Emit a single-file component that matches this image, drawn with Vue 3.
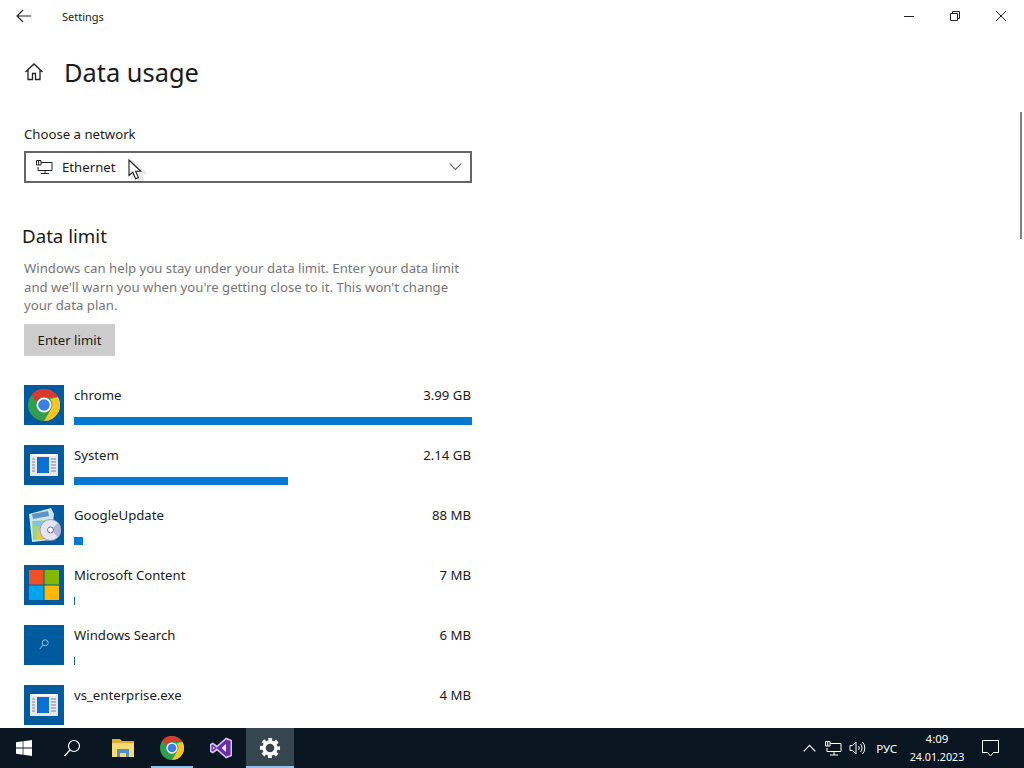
<script setup>
const apps = [
  { name: 'chrome', size: '3.99 GB', width: 398, icon: 'chrome' },
  { name: 'System', size: '2.14 GB', width: 214, icon: 'window' },
  { name: 'GoogleUpdate', size: '88 MB', width: 9, icon: 'setup' },
  { name: 'Microsoft Content', size: '7 MB', width: 1, icon: 'ms' },
  { name: 'Windows Search', size: '6 MB', width: 1, icon: 'search' },
  { name: 'vs_enterprise.exe', size: '4 MB', width: 0, icon: 'window' }
]
</script>

<template>
  <div class="screen">
    <div class="window">
      <header class="titlebar">
        <div class="title-left">
          <svg class="back" width="16" height="14" viewBox="0 0 16 14"><path d="M7 1 1 7l6 6M1 7h14" fill="none" stroke="#222" stroke-width="1.1" /></svg>
          <span class="app-title">Settings</span>
        </div>
        <div class="controls">
          <span class="ctl"><svg width="12" height="12" viewBox="0 0 12 12"><path d="M1 6.5h10" stroke="#222" /></svg></span>
          <span class="ctl"><svg width="12" height="12" viewBox="0 0 12 12"><path d="M1.5 3.5h7v7h-7zM3.5 3.5v-2h7v7h-2" fill="none" stroke="#222" /></svg></span>
          <span class="ctl"><svg width="12" height="12" viewBox="0 0 12 12"><path d="m1 1 10 10M11 1 1 11" stroke="#222" /></svg></span>
        </div>
      </header>

      <main class="content">
        <div class="page-head">
          <svg width="20" height="20" viewBox="0 0 20 20"><path d="M1.5 10 10 2l8.500 8M4 8v9.500h4.500v-6h3v6H16V8" fill="none" stroke="#222" stroke-width="1.3" /></svg>
          <h1>Data usage</h1>
        </div>

        <label class="field-label">Choose a network</label>
        <div class="select">
          <svg class="net" width="17" height="14" viewBox="0 0 17 14"><path d="M5 2.500h11v8H2V7M9 10.500v3M5 13.500h8M.5.500h4.500v4.500H.5zM2.700.500v4.500" fill="none" stroke="#222" /></svg>
          <span>Ethernet</span>
          <svg class="chev" width="13" height="8" viewBox="0 0 13 8"><path d="m.7.700 5.800 5.800L12.300.7" fill="none" stroke="#666" stroke-width="1.100" /></svg>
          <svg class="cursor" width="18" height="24" viewBox="0 0 18 24"><path d="M3 2v15l4-3 3 7 3-1.200-3-6.800h6z" fill="none" stroke="#000" stroke-opacity=".09" stroke-width="3" transform="translate(1.500 1)" /><path d="M1 1v15.500l3.800-3.300 2.800 6.600 2.800-1.200-2.800-6.300h5.200z" fill="#fff" stroke="#1a1a1a" stroke-width="1.100" /></svg>
        </div>

        <h2>Data limit</h2>
        <p class="desc">Windows can help you stay under your data limit. Enter your data limit and we'll warn you when you're getting close to it. This won't change your data plan.</p>
        <button class="limit-btn">Enter limit</button>

        <ul class="apps">
          <li v-for="app in apps" :key="app.name" class="app">
            <div class="tile">
              <svg v-if="app.icon === 'chrome'" width="32" height="32" viewBox="0 0 32 32">
                <circle cx="16" cy="16" r="16" fill="#2f9e4f" />
                <path d="M16 0a16 16 0 0 1 14 8H16a8 8 0 0 0-7.500 5L3.500 5.500A16 16 0 0 1 16 0z" fill="#d93a2e" />
                <path d="M30 8a16 16 0 0 1-14 24l7-12a8 8 0 0 0-1-10z" fill="#f8c325" />
                <circle cx="16" cy="16" r="7.500" fill="#fff" />
                <circle cx="16" cy="16" r="5.800" fill="#3b7fe6" />
              </svg>
              <svg v-else-if="app.icon === 'window'" width="28" height="22" viewBox="0 0 28 22">
                <rect width="28" height="22" fill="#e6e9ed" />
                <rect width="28" height="2" fill="#fafbfc" />
                <rect x="7" y="3" width="12" height="16" fill="#0c6fd6" />
                <path d="M2 5h3M2 8h3M2 11h3M2 14h3M2 17h3M21 5h5M21 8h5M21 11h5M21 14h5M21 17h5" stroke="#7b8790" />
              </svg>
              <svg v-else-if="app.icon === 'setup'" width="33" height="34" viewBox="0 0 33 34">
                <path d="M1 6 23 0l3 6-3 26-19 2z" fill="#cfe4f2" />
                <path d="M4 6 20 3l1 5-16 3z" fill="#5d93c4" />
                <path d="M4 13l15-1v19L5 32z" fill="#a8d27a" />
                <path d="M9 22h6v9H9z" fill="#e7c94c" />
                <path d="M5 13h14v5H5z" fill="#7fc3e8" />
                <circle cx="22.500" cy="22" r="10.500" fill="#e4e5f2" stroke="#8f90ad" stroke-width=".8" />
                <path d="M22.500 22 30 15a10.500 10.500 0 0 1 0 14z" fill="#b3b5d6" />
                <circle cx="22.500" cy="22" r="3" fill="#fff" stroke="#6f719c" />
              </svg>
              <svg v-else-if="app.icon === 'ms'" width="30" height="30" viewBox="0 0 30 30">
                <rect width="14.500" height="14.500" fill="#f25022" />
                <rect x="15.500" width="14.500" height="14.500" fill="#7fba00" />
                <rect y="15.500" width="14.500" height="14.500" fill="#00a4ef" />
                <rect x="15.500" y="15.500" width="14.500" height="14.500" fill="#ffb900" />
              </svg>
              <svg v-else width="10" height="11" viewBox="0 0 10 11"><circle cx="6.200" cy="3.800" r="3" fill="none" stroke="#7fc4ee" /><path d="M4 6 .8 10" stroke="#7fc4ee" /></svg>
            </div>
            <div class="app-body">
              <div class="app-line">
                <span>{{ app.name }}</span>
                <span>{{ app.size }}</span>
              </div>
              <div v-if="app.width" class="bar" :class="{ thin: app.width === 1 }" :style="{ width: app.width + 'px' }"></div>
            </div>
          </li>
        </ul>

        <div class="scrollbar"></div>
      </main>
    </div>

    <footer class="taskbar">
      <div class="task-left">
        <span class="task fixed"><svg width="16" height="16" viewBox="0 0 16 16"><path d="M0 2.300 6.700 1.300v6.300H0zM7.400 1.200 16 0v7.600H7.400zM0 8.400h6.700v6.300L0 13.700zM7.400 8.400H16V16l-8.600-1.200z" fill="#fff" /></svg></span>
        <span class="task fixed search"><svg width="18" height="18" viewBox="0 0 18 18"><circle cx="11" cy="7" r="5.500" fill="none" stroke="#fff" stroke-width="1.200" /><path d="M7 11 1.500 17" stroke="#fff" stroke-width="1.200" /></svg></span>
        <span class="task"><svg width="22" height="18" viewBox="0 0 22 18"><path d="M0 0h8l2 2h12v15H0z" fill="#e3a93a" /><path d="M0 4h22v14H0z" fill="#fbd977" /><path d="M5 18v-8h12v8h-3v-4H8v4z" fill="#4f90c8" /></svg></span>
        <span class="task running"><svg width="24" height="24" viewBox="0 0 32 32">
          <circle cx="16" cy="16" r="16" fill="#2f9e4f" />
          <path d="M16 0a16 16 0 0 1 14 8H16a8 8 0 0 0-7.500 5L3.500 5.500A16 16 0 0 1 16 0z" fill="#d93a2e" />
          <path d="M30 8a16 16 0 0 1-14 24l7-12a8 8 0 0 0-1-10z" fill="#f8c325" />
          <circle cx="16" cy="16" r="7.500" fill="#fff" />
          <circle cx="16" cy="16" r="5.800" fill="#3b7fe6" />
        </svg></span>
        <span class="task"><svg width="24" height="24" viewBox="0 0 24 24"><path d="M17 1.500 23 4v16l-6 2.500L8 14.500l-4 3L1 16V8l3-1.500 4 3z" fill="#d9c4f2" /><path d="M17 3.500 21.500 5v14L17 20.500 7.800 12.300 4 15.500 2.500 15V9L4 8.500l3.800 3.200z" fill="#6a2fa3" /><path d="M17 8v8l-4.500-4z" fill="#efe6fb" /><path d="M4 10.500v3L6 12z" fill="#e6d9f7" /></svg></span>
        <span class="task running active"><svg width="22" height="22" viewBox="0 0 22 22"><circle cx="11" cy="11" r="6" fill="none" stroke="#fff" stroke-width="3.400" /><circle cx="11" cy="11" r="8.600" fill="none" stroke="#fff" stroke-width="3" stroke-dasharray="3.800 2.950" stroke-dashoffset="1.900" /></svg></span>
      </div>
      <div class="tray">
        <svg class="caret" width="13" height="8" viewBox="0 0 13 8"><path d="m.7 7.300 5.800-6 5.800 6" fill="none" stroke="#fff" stroke-width="1.200" /></svg>
        <svg class="tray-net" width="17" height="15" viewBox="0 0 17 15"><path d="M5 2.500h11v8H2V7M9 10.500v3.500M5 14h8M.5.500h4.500v4.500H.5zM2.700.500v4.500" fill="none" stroke="#fff" /></svg>
        <svg class="tray-vol" width="17" height="14" viewBox="0 0 17 14"><path d="M1 4.500h2.500L7 1v12L3.500 9.500H1zM9.500 5a3 3 0 0 1 0 4M11.500 3a6 6 0 0 1 0 8M13.500 1a9 9 0 0 1 0 12" fill="none" stroke="#fff" /></svg>
        <span class="lang">РУС</span>
        <div class="clock"><span>4:09</span><span>24.01.2023</span></div>
        <svg class="notif" width="18" height="17" viewBox="0 0 18 17"><path d="M.5.500h16v12h-5l-3 3.500-3-3.500h-5z" fill="none" stroke="#fff" /></svg>
      </div>
    </footer>
  </div>
</template>

<style>
html, body { margin: 0; background: #fff; }
</style>

<style scoped>
.screen {
  width: 1024px;
  height: 768px;
  overflow: hidden;
  display: flex;
  flex-direction: column;
  font-family: "Noto Sans", "Open Sans", sans-serif;
  font-size: 13.200px;
  color: #1a1a1a;
  background: #fff;
}
.window {
  flex: 1;
  min-height: 0;
  display: flex;
  flex-direction: column;
}
.titlebar {
  height: 32px;
  flex: none;
  display: flex;
  justify-content: space-between;
  align-items: center;
}
.title-left {
  display: flex;
  align-items: center;
  padding-left: 16px;
}
.back { margin-right: 30px; margin-top: -1px; }
.app-title { font-size: 11px; }
.controls { display: flex; }
.ctl {
  width: 46px;
  height: 32px;
  display: flex;
  align-items: center;
  justify-content: center;
}
.content {
  position: relative;
  flex: 1;
  min-height: 0;
  overflow: hidden;
  padding: 0 24px;
}
.page-head {
  display: flex;
  align-items: center;
  height: 40px;
  margin-top: 20px;
  gap: 20px;
}
h1 {
  margin: 0;
  font-size: 25.400px;
  font-weight: 400;
  line-height: 40px;
}
.field-label {
  display: block;
  margin-top: 30px;
  line-height: 24px;
}
.select {
  position: relative;
  box-sizing: border-box;
  width: 448px;
  height: 32px;
  margin-top: 5px;
  border: 2px solid #666;
  display: flex;
  align-items: center;
  padding-left: 10px;
}
.net { margin-right: 9px; }
.chev { position: absolute; right: 8px; top: 10px; }
.cursor { position: absolute; left: 102px; top: 6px; }
h2 {
  margin: 38px 0 0 -2px;
  font-size: 18.700px;
  font-weight: 400;
  line-height: 30px;
}
.desc {
  width: 448px;
  margin: 8px 0 0;
  line-height: 18.600px;
  color: #767676;
}
.limit-btn {
  display: block;
  width: 91px;
  height: 32px;
  margin-top: 9px;
  padding: 0;
  border: 0;
  background: #ccc;
  color: #1a1a1a;
  font: inherit;
}
.apps {
  list-style: none;
  margin: 29px 0 0;
  padding: 0;
  width: 448px;
  display: flex;
  flex-direction: column;
  gap: 20px;
}
.app {
  display: flex;
  height: 40px;
  gap: 10px;
}
.tile {
  width: 40px;
  height: 40px;
  flex: none;
  background: #005a9e;
  display: flex;
  align-items: center;
  justify-content: center;
}
.app-body { flex: 1; }
.app-line {
  display: flex;
  justify-content: space-between;
  line-height: 20px;
  padding-right: 1px;
}
.bar {
  height: 8px;
  margin-top: 12px;
  background: #0078d4;
}
.bar.thin { background: #13707c; }
.scrollbar {
  position: absolute;
  right: 2px;
  top: 80px;
  width: 2px;
  height: 127px;
  background: #808080;
}
.taskbar {
  height: 40px;
  flex: none;
  display: flex;
  justify-content: space-between;
  background: #0a1722;
  color: #fff;
}
.task-left { display: flex; }
.task {
  position: relative;
  width: 49.330px;
  height: 40px;
  display: flex;
  align-items: center;
  justify-content: center;
  box-sizing: border-box;
}
.task.fixed { width: 48px; }
.task.search { margin-right: 2px; }
.task.running::after {
  content: "";
  position: absolute;
  left: 4px;
  right: 4px;
  bottom: 0;
  height: 2px;
  background: #8cc4ef;
}
.task.active { background: #35464f; width: 48px; }
.task.active::after { left: 0; right: 0; }
.tray {
  display: flex;
  align-items: center;
  padding-right: 24px;
  font-size: 11.500px;
}
.caret { margin-right: 9px; }
.tray-net { margin-right: 7px; }
.tray-vol { margin-right: 10px; }
.lang { margin-right: 12px; }
.clock {
  width: 56px;
  margin-right: 17px;
  display: flex;
  flex-direction: column;
  align-items: center;
  line-height: 18px;
  font-size: 10.700px;
}
.clock span:first-child { font-size: 11.500px; }
</style>
